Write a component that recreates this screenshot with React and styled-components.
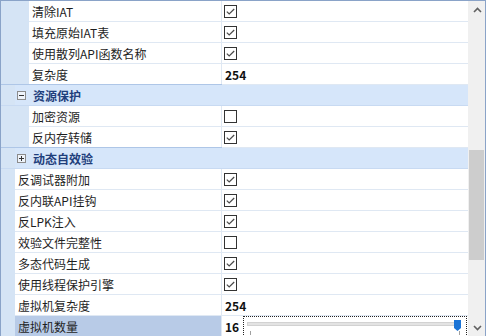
import React from "react";
import styled, { createGlobalStyle } from "styled-components";

const GlobalStyle = createGlobalStyle`
  html, body {
    margin: 0;
    padding: 0;
    background: #ffffff;
  }
  body {
    font-family: "Noto Sans CJK SC", "Liberation Sans", sans-serif;
    font-size: 12px;
    color: #1e1e1e;
  }
`;

const rows = [
  { type: "item", level: 2, name: "清除IAT", check: true },
  { type: "item", level: 2, name: "填充原始IAT表", check: true },
  { type: "item", level: 2, name: "使用散列API函数名称", check: true },
  { type: "item", level: 2, name: "复杂度", value: "254" },
  { type: "cat", name: "资源保护", open: true },
  { type: "item", level: 2, name: "加密资源", check: false },
  { type: "item", level: 2, name: "反内存转储", check: true },
  { type: "cat", name: "动态自效验", open: false },
  { type: "item", level: 1, name: "反调试器附加", check: true },
  { type: "item", level: 1, name: "反内联API挂钩", check: true },
  { type: "item", level: 1, name: "反LPK注入", check: true },
  { type: "item", level: 1, name: "效验文件完整性", check: false },
  { type: "item", level: 1, name: "多态代码生成", check: true },
  { type: "item", level: 1, name: "使用线程保护引擎", check: true },
  { type: "item", level: 1, name: "虚拟机复杂度", value: "254" },
  { type: "item", level: 1, name: "虚拟机数量", value: "16", selected: true, slider: true },
];

const Frame = styled.div`
  width: 486px;
  height: 336px;
  box-sizing: border-box;
  border: 1px solid #8aa3c8;
  border-bottom: none;
  display: flex;
  overflow: hidden;
`;

const Grid = styled.div`
  flex: 1;
  display: flex;
  flex-direction: column;
  background: #d5e4f5;
  overflow: hidden;
`;

// level 2 rows sit one indent deeper than level 1 rows
const Row = styled.div`
  display: grid;
  grid-template-columns: ${(p) => (p.$level === 2 ? "28px 192px" : "14px 206px")} 1px 1fr;
  height: 21px;
  flex: none;
`;

const Gutter = styled.div`
  background: #d5e4f5;
`;

const NameCell = styled.div`
  display: flex;
  align-items: center;
  padding-left: 3px;
  height: 20px;
  border-bottom: 1px solid #dfe8f3;
  background: ${(p) => (p.$selected ? "#b8cbe7" : "#ffffff")};
  white-space: nowrap;
  overflow: hidden;
`;

const Divider = styled.div`
  background: #dfe8f3;
`;

const ValueCell = styled.div`
  position: relative;
  display: flex;
  align-items: center;
  padding-left: 3px;
  height: 20px;
  border-bottom: 1px solid #dfe8f3;
  background: #ffffff;
  font-weight: 700;
  color: #111;
`;

const CatRow = styled.div`
  display: flex;
  align-items: center;
  height: 20px;
  flex: none;
  border-bottom: 1px solid #c8daf2;
  box-shadow: 0 -1px 0 #aec6e7;
  background: #d5e4f5;
`;

const CatBody = styled.div`
  margin-left: 14px;
  flex: 1;
  height: 100%;
  display: flex;
  align-items: center;
  gap: 7px;
  padding-left: 2px;
  background: #d6e6fa;
  color: #1f3f7c;
  font-weight: 700;
`;

const Toggle = styled.svg`
  flex: none;
`;

const CheckBox = styled.svg`
  margin-left: -1px;
  flex: none;
`;

const SliderBox = styled.div`
  position: absolute;
  left: 21px;
  right: 1px;
  top: 0;
  bottom: -1px;
  border: 1px dotted #222;
  border-bottom: none;
  background: #fff;
`;

const Track = styled.div`
  position: absolute;
  left: 3px;
  right: 5px;
  top: 5px;
  height: 2px;
  background: #e3e3e3;
  border: 1px solid #d2d2d2;
`;

const Tick = styled.div`
  position: absolute;
  top: 14px;
  width: 1px;
  height: 4px;
  background: #a0a0a0;
  left: ${(p) => p.$left}px;
`;

const Thumb = styled.svg`
  position: absolute;
  right: 5px;
  top: 3px;
`;

const Scrollbar = styled.div`
  width: 16px;
  flex: none;
  background: #f0f0f0;
  display: flex;
  flex-direction: column;
  align-items: center;
  border-left: 1px solid #f0f0f0;
`;

const Arrow = styled.div`
  height: 17px;
  width: 100%;
  display: flex;
  align-items: center;
  justify-content: center;
  flex: none;
`;

const TrackArea = styled.div`
  flex: 1;
  width: 100%;
  display: flex;
  flex-direction: column;
`;

const ScrollThumb = styled.div`
  margin-top: 132px;
  height: 110px;
  width: 15px;
  background: #cdcdcd;
`;

const Check = ({ on }) => (
  <CheckBox width="13" height="13" viewBox="0 0 13 13">
    <rect x="0.5" y="0.5" width="12" height="12" fill="#fff" stroke="#333" />
    {on && (
      <path d="M2.8 6.6 L5.2 9 L10.2 4" fill="none" stroke="#4a4a4a" strokeWidth="1.2" />
    )}
  </CheckBox>
);

const Slider = () => (
  <SliderBox>
    <Track />
    <Tick $left={6} />
    <Tick $left={215} />
    <Thumb width="7" height="11" viewBox="0 0 7 11">
      <path d="M0 0 H7 V8 L3.5 11 L0 8 Z" fill="#1b74d6" />
    </Thumb>
  </SliderBox>
);

const Category = ({ name, open }) => (
  <CatRow>
    <CatBody>
      <Toggle width="9" height="9" viewBox="0 0 9 9">
        <rect x="0.5" y="0.5" width="8" height="8" fill="#eef3fa" stroke="#8c8c8c" />
        <path d="M2 4.5 H7" stroke="#333" />
        {!open && <path d="M4.5 2 V7" stroke="#333" />}
      </Toggle>
      <span>{name}</span>
    </CatBody>
  </CatRow>
);

const Item = ({ r }) => (
  <Row $level={r.level}>
    <Gutter />
    <NameCell $selected={r.selected}>{r.name}</NameCell>
    <Divider />
    <ValueCell>
      {r.value !== undefined ? r.value : <Check on={r.check} />}
      {r.slider && <Slider />}
    </ValueCell>
  </Row>
);

export default function App() {
  return (
    <>
      <GlobalStyle />
      <Frame>
        <Grid>
          {rows.map((r, i) =>
            r.type === "cat" ? (
              <Category key={i} name={r.name} open={r.open} />
            ) : (
              <Item key={i} r={r} />
            )
          )}
        </Grid>
        <Scrollbar>
          <Arrow>
            <svg width="9" height="6" viewBox="0 0 9 6">
              <path d="M1 5 L4.5 1.5 L8 5" fill="none" stroke="#606060" strokeWidth="1.6" />
            </svg>
          </Arrow>
          <TrackArea>
            <ScrollThumb />
          </TrackArea>
          <Arrow>
            <svg width="9" height="6" viewBox="0 0 9 6">
              <path d="M1 1 L4.5 4.5 L8 1" fill="none" stroke="#606060" strokeWidth="1.6" />
            </svg>
          </Arrow>
        </Scrollbar>
      </Frame>
    </>
  );
}
